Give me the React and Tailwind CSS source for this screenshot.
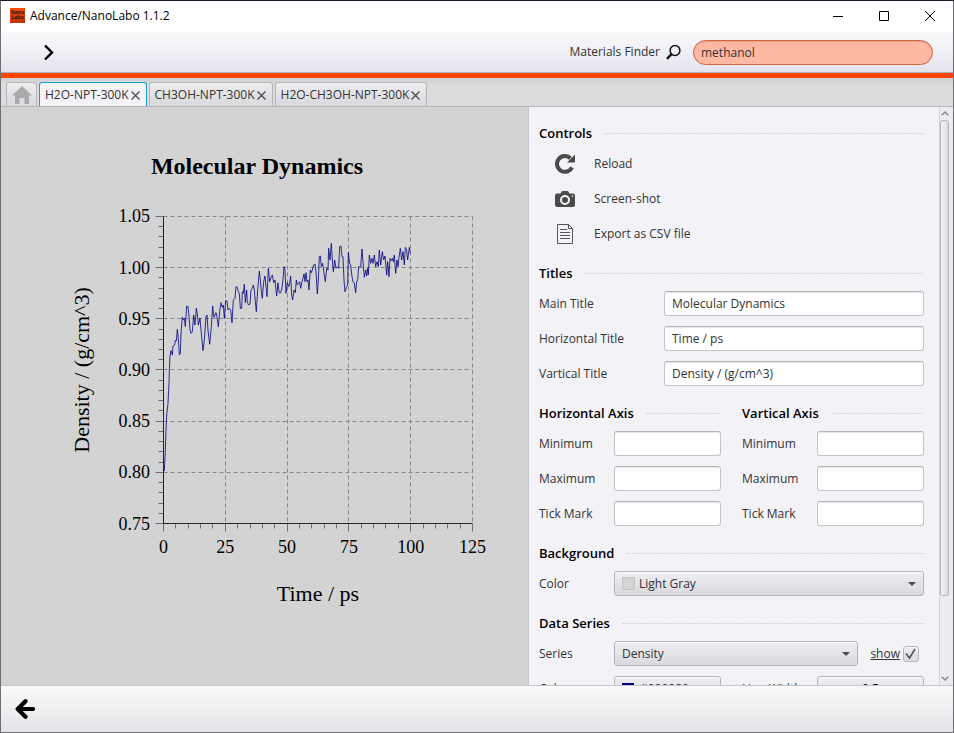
import { useState } from "react";

const TRACE =
  "43,723 46,660 48,600 50,555 54,520 57,460 58,420 60,380 63,362 67,375 69,348 74,345 76,330 79,333 82,298 85,325 88,375 91,370 93,310 97,262 100,270 103,265 106,290 110,228 114,230 117,258 120,298 123,310 127,305 131,255 135,285 139,235 142,252 145,285 150,265 154,310 159,362 163,330 168,260 171,255 174,300 179,343 184,290 188,228 192,262 198,248 201,260 205,290 209,245 213,218 217,232 220,225 223,265 227,212 231,213 234,240 238,235 242,240 246,278 250,210 255,205 258,170 262,172 265,185 268,190 271,235 275,235 277,185 280,190 283,163 286,218 290,180 292,218 296,225 300,222 303,180 307,175 310,165 313,180 316,215 319,245 323,180 328,123 331,150 334,185 337,205 341,155 345,138 348,170 351,200 355,115 359,155 364,140 367,135 371,158 375,150 380,198 384,158 387,185 390,190 395,180 399,150 402,110 405,120 408,190 412,158 416,170 419,160 422,138 425,195 428,210 432,180 436,188 439,150 442,165 446,160 449,155 452,175 456,155 459,145 462,132 465,155 468,128 471,155 474,150 477,180 481,120 484,128 487,120 491,105 495,102 498,125 502,192 505,150 508,80 511,78 514,110 518,100 522,130 526,155 530,115 534,120 536,55 540,90 544,40 547,90 550,125 554,90 558,115 562,110 566,115 569,50 573,48 576,80 579,80 582,150 585,185 590,170 593,165 595,68 599,100 602,105 606,140 609,155 613,160 617,188 620,155 623,150 626,110 632,110 636,57 639,95 643,142 647,120 650,138 653,115 655,135 658,75 662,100 666,85 669,100 673,75 677,110 681,95 685,110 688,60 692,105 697,65 701,90 705,78 710,135 713,95 717,140 720,85 724,92 727,85 730,95 733,75 737,130 741,90 744,110 748,75 751,55 755,90 759,65 763,105 766,52 770,60 773,90 778,52 781,70";

const X0 = 162.5;
const Y0 = 416.5;
const X_STEP = 61.8;
const Y_STEP = 51.17;
const yLabels = ["0.75", "0.80", "0.85", "0.90", "0.95", "1.00", "1.05"];
const xLabels = ["0", "25", "50", "75", "100", "125"];
const range = (n) => Array.from({ length: n }, (_, i) => i);

function Chart({ titles }) {
  const right = X0 + 5 * X_STEP;
  const top = Y0 - 6 * Y_STEP;
  const snap = (v) => Math.floor(v) + 0.5;

  return (
    <svg viewBox="0 0 527 578" className="block h-full w-full font-['Liberation_Serif',serif]">
      <g stroke="#868686" strokeDasharray="4 3">
        {yLabels.slice(1).map((l, i) => (
          <line key={l} x1={X0} x2={right} y1={snap(Y0 - (i + 1) * Y_STEP)} y2={snap(Y0 - (i + 1) * Y_STEP)} />
        ))}
        {xLabels.slice(1).map((l, i) => (
          <line key={l} x1={snap(X0 + (i + 1) * X_STEP)} x2={snap(X0 + (i + 1) * X_STEP)} y1={top} y2={Y0} />
        ))}
      </g>

      {/* Tick marks, long ones at the labels */}
      <g stroke="#6e6e6e">
        {range(31).map((i) => {
          const y = snap(Y0 - (i * Y_STEP) / 5);
          return <line key={i} x1={i % 5 ? X0 - 5 : X0 - 8} x2={X0} y1={y} y2={y} />;
        })}
        {range(26).map((i) => {
          const x = snap(X0 + (i * X_STEP) / 5);
          return <line key={i} x1={x} x2={x} y1={Y0} y2={i % 5 ? Y0 + 5 : Y0 + 8} />;
        })}
      </g>
      <path d={`M${X0} ${top}V${Y0}H${right}`} fill="none" stroke="#222" />

      <polyline
        points={TRACE}
        transform="translate(149 123) scale(0.33333)"
        fill="none"
        stroke="#000080"
        strokeWidth="2.4"
      />

      <g fontSize="18" textAnchor="end">
        {yLabels.map((l, i) => (
          <text key={l} x="149" y={Y0 - i * Y_STEP + 6}>{l}</text>
        ))}
      </g>
      <g fontSize="18" textAnchor="middle">
        {xLabels.map((l, i) => (
          <text key={l} x={X0 + i * X_STEP} y="446">{l}</text>
        ))}
      </g>
      <text x="256" y="67" fontSize="24" fontWeight="bold" textAnchor="middle">{titles.main}</text>
      <text x="317" y="494" fontSize="22" textAnchor="middle">{titles.horizontal}</text>
      <text transform="translate(88 263) rotate(-90)" fontSize="22" textAnchor="middle">{titles.vertical}</text>
    </svg>
  );
}

function Heading({ children }) {
  return (
    <div className="mb-2 flex h-5 items-center gap-3">
      <h2 className="text-[13px] leading-5 font-semibold whitespace-nowrap text-black">{children}</h2>
      <div className="h-px flex-1 bg-[repeating-linear-gradient(90deg,#d6d6da_0_2px,transparent_2px_3px)]" />
    </div>
  );
}

const inputClass =
  "h-[25px] min-w-0 flex-1 rounded-[3px] border border-[#c4c4c8] border-t-[#b4b4b8] bg-white px-[7px] shadow-[inset_0_2px_1px_-1px_#e6e6e6]";
const boxClass =
  "rounded-[3px] border border-[#b4b4b9] bg-linear-to-b from-[#efeff3] to-[#d9d9de] shadow-[inset_0_1px_0_#fafafc]";

function Field({ id, label, labelClass = "w-[75px]", value, onChange }) {
  return (
    <div className="flex h-[25px] items-center">
      <label htmlFor={id} className={`${labelClass} shrink-0`}>{label}</label>
      <input id={id} type="text" value={value} onChange={onChange} className={inputClass} />
    </div>
  );
}

function AxisFields({ name, title }) {
  const [values, setValues] = useState({ Minimum: "", Maximum: "", "Tick Mark": "" });
  return (
    <section className="min-w-0 flex-1">
      <Heading>{title}</Heading>
      <div className="flex flex-col gap-2.5">
        {Object.keys(values).map((k) => (
          <Field
            key={k}
            id={`${name}-${k.replace(" ", "-")}`}
            label={k}
            value={values[k]}
            onChange={(e) => setValues({ ...values, [k]: e.target.value })}
          />
        ))}
      </div>
    </section>
  );
}

function Select({ id, options, swatch }) {
  return (
    <div className="relative min-w-0 flex-1">
      <select id={id} className={`${boxClass} block h-[25px] w-full appearance-none ${swatch ? "pl-6" : "pl-[7px]"}`}>
        {options.map((o) => <option key={o}>{o}</option>)}
      </select>
      {swatch && <span className={`pointer-events-none absolute top-1.5 left-2 size-[13px] border border-[#c6c6c6] ${swatch}`} />}
      <svg viewBox="0 0 8 4" className="pointer-events-none absolute top-[11px] right-2 h-1 w-2"><path d="M0 0h8L4 4z" fill="#4a4a4a" /></svg>
    </div>
  );
}

const ReloadIcon = () => (
  <svg viewBox="0 0 20 20" className="size-5">
    <path d="M17 13.400A7.900 7.900 0 1 1 15.400 4.200" fill="none" stroke="#4a4a4a" strokeWidth="4" />
    <path d="M20 .6v7.800h-8z" fill="#4a4a4a" />
  </svg>
);

const CameraIcon = () => (
  <svg viewBox="0 0 20 16" className="h-4 w-5">
    <path d="M2 2.500h3.500L7 0h6l1.500 2.500H18a2 2 0 0 1 2 2V14a2 2 0 0 1-2 2H2a2 2 0 0 1-2-2V4.500a2 2 0 0 1 2-2z" fill="#4a4a4a" />
    <circle cx="10" cy="9" r="4" fill="none" stroke="#f3f2f7" strokeWidth="2" />
    <circle cx="17.500" cy="5" r="0.800" fill="#f3f2f7" />
  </svg>
);

const FileIcon = () => (
  <svg viewBox="0 0 16 20" className="h-5 w-4" fill="none" stroke="#555">
    <path d="M.5.5h11l4 4v15H.5z" />
    <path d="M11.500.5v4h4" />
    <path d="M3 5.500h7M3 8.500h10M3 11.500h10M3 14.500h10" />
  </svg>
);

const controls = [
  { label: "Reload", Icon: ReloadIcon },
  { label: "Screen-shot", Icon: CameraIcon },
  { label: "Export as CSV file", Icon: FileIcon },
];

const tabs = ["H2O-NPT-300K", "CH3OH-NPT-300K", "H2O-CH3OH-NPT-300K"];

const Cross = () => (
  <svg viewBox="0 0 9 9" className="size-[9px]"><path d="M.5.5l8 8M8.500.5l-8 8" stroke="#4a4a4a" strokeWidth="1.300" /></svg>
);

export default function App() {
  const [active, setActive] = useState(0);
  const [query, setQuery] = useState("methanol");
  const [show, setShow] = useState(true);
  const [titles, setTitles] = useState({
    main: "Molecular Dynamics",
    horizontal: "Time / ps",
    vertical: "Density / (g/cm^3)",
  });

  return (
    <div className="flex h-screen flex-col overflow-hidden border border-[#6f6f73] border-t-[#161c2b] bg-[#dcdcdd] font-['Open_Sans','Noto_Sans',sans-serif] text-[12px] leading-4 text-[#333]">
      {/* Title bar */}
      <header className="flex h-[31px] shrink-0 items-center bg-white pr-[18px] pb-0.5 pl-[9px] text-black">
        <svg viewBox="0 0 15 15" className="mr-[5px] size-[15px]">
          <defs>
            <linearGradient id="logo" x2="0" y2="1"><stop stopColor="#ff4a0a" /><stop offset="1" stopColor="#b93208" /></linearGradient>
          </defs>
          <rect width="15" height="15" fill="url(#logo)" />
          <g fill="#3a1208" fontSize="5" fontWeight="bold" textAnchor="middle"><text x="7.500" y="6">Nano</text><text x="7.500" y="11">Labo</text></g>
        </svg>
        <h1 className="flex-1">Advance/NanoLabo 1.1.2</h1>
        <div className="flex items-center gap-9">
          <button aria-label="Minimize"><svg viewBox="0 0 10 10" className="size-2.5"><path d="M0 5.500h10" stroke="#000" /></svg></button>
          <button aria-label="Maximize"><svg viewBox="0 0 10 10" className="size-2.5"><path d="M.5.5h9v9h-9z" fill="none" stroke="#000" /></svg></button>
          <button aria-label="Close"><svg viewBox="0 0 10 10" className="size-2.5"><path d="M0 0l10 10M10 0L0 10" stroke="#000" /></svg></button>
        </div>
      </header>

      {/* Toolbar */}
      <div className="flex h-[41px] shrink-0 items-center border-b border-[#b0b2bd] bg-linear-to-b from-[#fafafc] to-[#e4e4ee] pr-5 pl-[43px]">
        <button aria-label="Expand menu">
          <svg viewBox="0 0 10 16" className="h-4 w-2.5"><path d="M1 1.500l7 7-7 7" fill="none" stroke="#000" strokeWidth="2.400" /></svg>
        </button>
        <label htmlFor="finder" className="ml-auto">Materials Finder</label>
        <svg viewBox="0 0 15 15" className="mr-3 ml-1.5 size-[15px]" fill="none" stroke="#111">
          <circle cx="9" cy="5.500" r="4.900" strokeWidth="1.500" />
          <path d="M5.500 9.200L1 13.800" strokeWidth="2.400" />
        </svg>
        <input
          id="finder"
          type="text"
          value={query}
          onChange={(e) => setQuery(e.target.value)}
          className="h-[25px] w-60 rounded-full border border-[#d2623c] bg-[#ffb9a3] px-[7px] shadow-[inset_0_2px_2px_-1px_#e2a08c]"
        />
      </div>
      <div className="h-[5px] shrink-0 bg-[#ff4500]" />

      {/* Tabs */}
      <nav className="flex h-[29px] shrink-0 items-end gap-0.5 border-b border-[#b5b5ba] bg-linear-to-b from-[#d0d0d2] to-[#dcdcdd] to-25% pl-[5px]">
        <button aria-label="Home" className="flex h-6 w-[31px] items-center justify-center rounded-t-[3px] border border-b-0 border-[#b5b5ba] bg-linear-to-b from-[#ededf0] to-[#d9d9dd]">
          <svg viewBox="0 0 20 18" className="h-[18px] w-5"><path d="M10 0l10 9.500h-3V18h-4.500v-6h-5v6H3V9.500H0L10 0z" fill="#a9a9ab" /></svg>
        </button>
        {tabs.map((t, i) => (
          <div
            key={t}
            className={`flex h-6 items-center gap-0.5 rounded-t-[3px] border border-b-0 px-[5px] pt-px whitespace-nowrap ${
              i === active ? "border-[#1b9ecb] bg-[#f3f2f7]" : "border-[#b5b5ba] bg-linear-to-b from-[#ededf0] to-[#d9d9dd]"
            }`}
          >
            <button onClick={() => setActive(i)}>{t}</button>
            <button aria-label={`Close ${t}`} className="mr-px"><Cross /></button>
          </div>
        ))}
      </nav>

      <main className="flex min-h-0 flex-1">
        <div className="min-w-0 flex-1 bg-[#d3d3d3]">
          <Chart titles={titles} />
        </div>

        <aside className="flex w-[425px] shrink-0 border-l border-[#c6c6cc] bg-[#f3f2f7]">
          <div className="flex min-w-0 flex-1 flex-col gap-[17px] overflow-hidden pt-4 pr-[15px] pl-2.5">
            <section>
              <Heading>Controls</Heading>
              <div className="flex flex-col gap-2.5">
                {controls.map(({ label, Icon }) => (
                  <button key={label} className="flex h-[25px] items-center gap-[3px] text-left">
                    <span className="flex w-[52px] justify-center"><Icon /></span>
                    {label}
                  </button>
                ))}
              </div>
            </section>

            <section>
              <Heading>Titles</Heading>
              <div className="flex flex-col gap-2.5">
                {[["main", "Main Title"], ["horizontal", "Horizontal Title"], ["vertical", "Vartical Title"]].map(([k, label]) => (
                  <Field
                    key={k}
                    id={k}
                    label={label}
                    labelClass="w-[125px]"
                    value={titles[k]}
                    onChange={(e) => setTitles({ ...titles, [k]: e.target.value })}
                  />
                ))}
              </div>
            </section>

            <div className="flex gap-[21px]">
              <AxisFields name="h" title="Horizontal Axis" />
              <AxisFields name="v" title="Vartical Axis" />
            </div>

            <section>
              <Heading>Background</Heading>
              <div className="flex h-[25px] items-center">
                <label htmlFor="bg" className="w-[75px]">Color</label>
                <Select id="bg" options={["Light Gray", "White"]} swatch="bg-[#d3d3d3]" />
              </div>
            </section>

            <section>
              <Heading>Data Series</Heading>
              <div className="flex flex-col gap-2.5">
                <div className="flex h-[25px] items-center">
                  <label htmlFor="series" className="w-[75px]">Series</label>
                  <Select id="series" options={["Density"]} />
                  <label htmlFor="show" className="mr-[3px] ml-3 underline">show</label>
                  <span className="relative mr-[5px] size-4">
                    <input
                      id="show"
                      type="checkbox"
                      checked={show}
                      onChange={() => setShow(!show)}
                      className={`${boxClass} block size-4 appearance-none`}
                    />
                    {show && (
                      <svg viewBox="0 0 16 16" className="pointer-events-none absolute inset-0 size-4">
                        <path d="M3 7.500L6.500 12l5.500-9" fill="none" stroke="#555" strokeWidth="1.600" />
                      </svg>
                    )}
                  </span>
                </div>
                <div className="flex h-[25px] items-center gap-[21px]">
                  <div className="flex flex-1 items-center">
                    <label htmlFor="color" className="w-[75px]">Color</label>
                    <button id="color" className={`${boxClass} flex h-[25px] flex-1 items-center gap-1.5 pl-[7px]`}>
                      <span className="size-3 bg-[#000080]" />#000080
                    </button>
                  </div>
                  <div className="flex flex-1 items-center">
                    <label htmlFor="line-width" className="w-[75px]">Line Width</label>
                    <button id="line-width" className={`${boxClass} h-[25px] flex-1 text-black`}>0.5</button>
                  </div>
                </div>
              </div>
            </section>
          </div>

          {/* Scroll bar */}
          <div className="flex w-3.5 flex-col items-center border-l border-[#d4d4da] bg-[#ebebf0] pr-1">
            <svg viewBox="0 0 8 5" className="my-1 h-[5px] w-2 shrink-0"><path d="M.7 4.300L4 1l3.300 3.300" fill="none" stroke="#888" strokeWidth="1.300" /></svg>
            <div className="w-[9px] flex-[476] rounded-[3px] border border-[#b4b4b9] bg-linear-to-r from-[#f4f4f8] to-[#dadae0]" />
            <div className="flex-[76]" />
            <svg viewBox="0 0 8 5" className="my-1 h-[5px] w-2 shrink-0"><path d="M.7.7L4 4 7.300.7" fill="none" stroke="#888" strokeWidth="1.300" /></svg>
          </div>
        </aside>
      </main>

      <footer className="flex h-[47px] shrink-0 items-center border-t border-[#c6c6ca] bg-linear-to-b from-[#fafafa] to-[#e4e4e8] pl-3.5">
        <button aria-label="Back">
          <svg viewBox="0 0 20 20" className="size-5"><path d="M10.500 2.200L2.700 10l7.800 7.800M3.500 10h14.500" fill="none" stroke="#000" strokeWidth="4.200" strokeLinecap="round" strokeLinejoin="round" /></svg>
        </button>
      </footer>
    </div>
  );
}
